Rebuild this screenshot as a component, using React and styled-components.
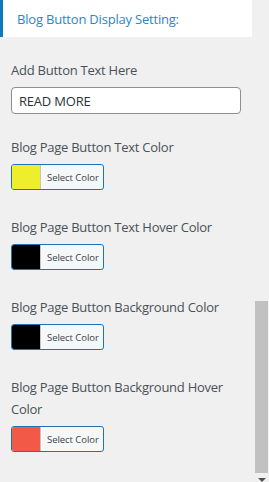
import React from "react";
import styled, { createGlobalStyle } from "styled-components";

const GlobalStyle = createGlobalStyle`
  html, body {
    margin: 0;
    padding: 0;
    background: #f0f0f0;
  }
  body {
    font-family: "Open Sans", "Noto Sans", sans-serif;
  }
`;

const Frame = styled.div`
  display: flex;
  width: 269px;
  height: 482px;
  overflow: hidden;
  background: #f0f0f0;
`;

const Panel = styled.div`
  width: 252px;
  flex-shrink: 0;
`;

const Header = styled.div`
  height: 37px;
  background: #fff;
  border-left: 3px solid #0e79bd;
  box-sizing: border-box;
  padding-left: 14px;
  display: flex;
  align-items: center;
  font-size: 13px;
  color: #2b86c8;
  letter-spacing: -0.2px;
`;

const Body = styled.div`
  padding: 22px 11px 0;
`;

const Field = styled.div`
  margin-bottom: ${(p) => p.gap || 26}px;
`;

const Label = styled.div`
  font-size: 13px;
  line-height: 22px;
  color: #4a5057;
  letter-spacing: -0.25px;
  margin-bottom: 6px;
`;

const TextInput = styled.input`
  display: block;
  box-sizing: border-box;
  width: 230px;
  height: 27px;
  margin: 0;
  padding: 0 7px;
  border: 1px solid #8c8f94;
  border-radius: 4px;
  background: #fff;
  font-family: inherit;
  font-size: 13px;
  color: #2c3338;
  letter-spacing: -0.2px;
  outline: none;
`;

const ColorButton = styled.button`
  display: flex;
  align-items: stretch;
  box-sizing: border-box;
  width: 93px;
  height: 26px;
  margin: 0;
  padding: 0;
  border: 1px solid #2271b1;
  border-radius: 3px;
  background: #f6f7f7;
  overflow: hidden;
  cursor: pointer;
`;

const Swatch = styled.span`
  width: 28px;
  background: ${(p) => p.color};
  border-right: 1px solid #c3c4c7;
`;

const ButtonText = styled.span`
  flex: 1;
  display: flex;
  align-items: center;
  padding-left: 6px;
  font-family: "Open Sans", "Noto Sans", sans-serif;
  font-size: 9.5px;
  color: #3c434a;
  letter-spacing: -0.05px;
`;

const Scrollbar = styled.div`
  width: 17px;
  padding-top: 301px;
  display: flex;
  flex-direction: column;
  align-items: center;
`;

const Thumb = styled.div`
  width: 13px;
  height: 172px;
  margin-left: 2px;
  background: #c1c1c1;
`;

const Arrow = styled.div`
  width: 0;
  height: 0;
  margin-top: 5px;
  margin-left: 2px;
  border-left: 4px solid transparent;
  border-right: 4px solid transparent;
  border-top: 4px solid #505050;
`;

const colors = [
  { label: "Blog Page Button Text Color", color: "#eeee2c" },
  { label: "Blog Page Button Text Hover Color", color: "#000000" },
  { label: "Blog Page Button Background Color", color: "#000000" },
  { label: "Blog Page Button Background Hover Color", color: "#f25a47" },
];

export default function App() {
  return (
    <>
      <GlobalStyle />
      <Frame>
        <Panel>
          <Header>Blog Button Display Setting:</Header>
          <Body>
            <Field gap={22}>
              <Label>Add Button Text Here</Label>
              <TextInput defaultValue="READ MORE" />
            </Field>
            {colors.map((c) => (
              <Field key={c.label} gap={26}>
                <Label>{c.label}</Label>
                <ColorButton type="button">
                  <Swatch color={c.color} />
                  <ButtonText>Select Color</ButtonText>
                </ColorButton>
              </Field>
            ))}
          </Body>
        </Panel>
        <Scrollbar>
          <Thumb />
          <Arrow />
        </Scrollbar>
      </Frame>
    </>
  );
}
